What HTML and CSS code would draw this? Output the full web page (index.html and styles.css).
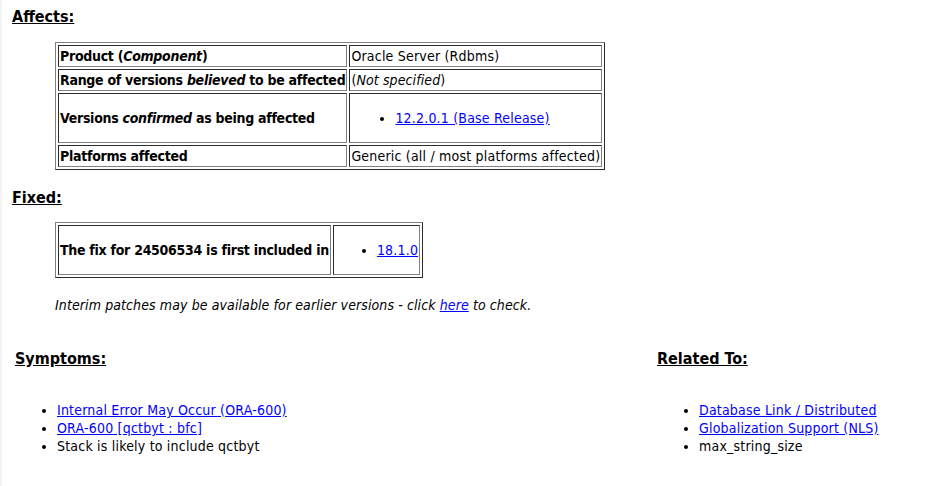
FILE: index.html
```html
<!DOCTYPE html>
<html lang="en">
<head>
<meta charset="utf-8">
<title>Bug 24506534</title>
<link rel="stylesheet" href="styles.css">
</head>
<body>
<div class="page">
  <h2 class="sec-title">Affects:</h2>
  <table class="info affects">
    <tr>
      <td class="label">Product (<i>Component</i>)</td>
      <td>Oracle Server (Rdbms)</td>
    </tr>
    <tr>
      <td class="label">Range of versions <i>believed</i> to be affected</td>
      <td>(<i>Not specified</i>)</td>
    </tr>
    <tr>
      <td class="label">Versions <i>confirmed</i> as being affected</td>
      <td><ul class="cell-list"><li><a href="#">12.2.0.1 (Base Release)</a></li></ul></td>
    </tr>
    <tr>
      <td class="label">Platforms affected</td>
      <td>Generic (all / most platforms affected)</td>
    </tr>
  </table>

  <h2 class="sec-title fixed-title">Fixed:</h2>
  <table class="info fixed">
    <tr>
      <td class="label">The fix for 24506534 is first included in</td>
      <td><ul class="cell-list short"><li><a href="#">18.1.0</a></li></ul></td>
    </tr>
  </table>
  <p class="interim"><i>Interim patches may be available for earlier versions - click <a href="#">here</a> to check.</i></p>

  <div class="bottom">
    <div class="col">
      <h2 class="sec-title">Symptoms:</h2>
      <ul class="plain-list">
        <li><a href="#">Internal Error May Occur (ORA-600)</a></li>
        <li><a href="#">ORA-600 [qctbyt : bfc]</a></li>
        <li>Stack is likely to include qctbyt</li>
      </ul>
    </div>
    <div class="col">
      <h2 class="sec-title">Related To:</h2>
      <ul class="plain-list">
        <li><a href="#">Database Link / Distributed</a></li>
        <li><a href="#">Globalization Support (NLS)</a></li>
        <li>max_string_size</li>
      </ul>
    </div>
  </div>
</div>
</body>
</html>
```

FILE: styles.css
```css
html {
  background: #ffffff;
}
body {
  margin: 0;
  border-left: 2px solid #f3f3f3;
  min-height: 486px;
  box-sizing: border-box;
  font-family: "DejaVu Sans Condensed", "DejaVu Sans", sans-serif;
  font-size: 14px;
  line-height: 18px;
  letter-spacing: 0.2px;
  color: #000;
}
.page {
  padding: 4px 10px 0 10px;
}
a {
  color: #0000ff;
  text-decoration: underline;
}
i {
  letter-spacing: 0.1px;
}
.sec-title {
  font-size: 16px;
  line-height: 20px;
  font-weight: bold;
  letter-spacing: 0;
  text-decoration: underline;
  margin: 3px 0 0 0;
}
table.info {
  border: 1px outset #808080;
  border-spacing: 2px;
  border-collapse: separate;
}
table.info td {
  border: 1px inset #808080;
  padding: 1px;
  vertical-align: middle;
}
table.info td.label {
  font-weight: bold;
  letter-spacing: -0.28px;
}
table.info td.label i {
  letter-spacing: -0.28px;
}
table.affects {
  margin: 15px 0 0 43px;
}
.fixed-title {
  margin-top: 18px;
}
table.fixed {
  margin: 14px 0 0 43px;
}
.cell-list {
  margin: 14px 0;
  padding-left: 44px;
}
.cell-list.short {
  margin: 14px 0;
  padding-left: 42px;
  padding-right: 0;
}
.interim {
  margin: 18px 0 0 43px;
}
.bottom {
  display: grid;
  grid-template-columns: 642px 1fr;
  margin-top: 32px;
}
.bottom .sec-title {
  margin-left: 3px;
}
.plain-list {
  margin: 32px 0 0 0;
  padding-left: 45px;
}
```
